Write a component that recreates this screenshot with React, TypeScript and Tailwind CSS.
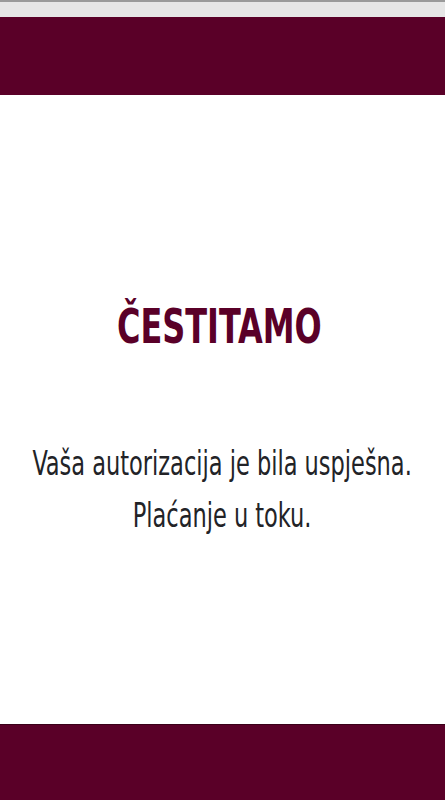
export default function App() {
  const font = { fontFamily: '"DejaVu Sans Condensed", "Liberation Sans", sans-serif' };
  return (
    <div className="flex h-[800px] w-full flex-col overflow-hidden bg-white" style={font}>
      {/* browser strip */}
      <div className="h-[17px] shrink-0 border-t-2 border-[#9a9a9a] bg-[#e6e6e6]" />
      <header className="h-[78px] shrink-0 bg-[#5a0028]" />

      <main className="flex flex-1 flex-col items-center pt-[203px] text-center">
        <h1 className="-translate-x-[3px] scale-x-[0.74] whitespace-nowrap text-[48px] font-bold leading-[56px] text-[#5a0028]">
          ČESTITAMO
        </h1>
        <div className="mt-[83px] flex scale-x-[0.735] flex-col items-center whitespace-nowrap text-[34px] leading-[52px] text-[#222327]">
          <p>Vaša autorizacija je bila uspješna.</p>
          <p>Plaćanje u toku.</p>
        </div>
      </main>

      <footer className="h-[76px] shrink-0 border-t border-[#3a0019] bg-[#5a0028]" />
    </div>
  );
}
